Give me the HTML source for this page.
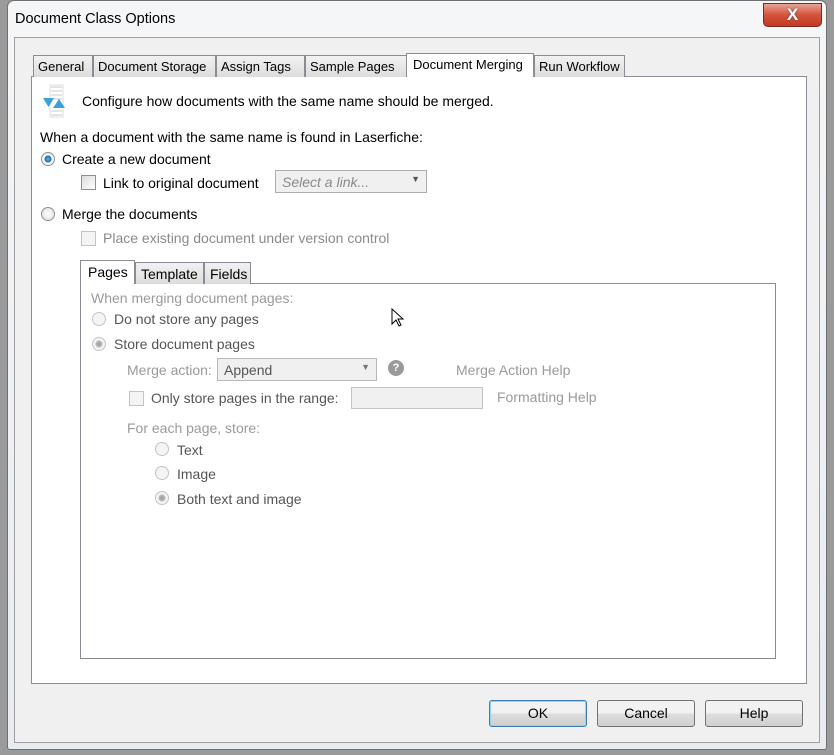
<!DOCTYPE html>
<html><head><style>
*{box-sizing:border-box;margin:0;padding:0}
body{width:834px;height:755px;overflow:hidden;background:#9a9a9a;font-family:"Liberation Sans",sans-serif;font-size:14px;color:#000;position:relative}
.abs{position:absolute}
.win{left:7px;top:0;width:820px;height:750px;background:linear-gradient(#f4f6f8,#e9ecef);border:1px solid #6e6e6e;border-radius:7px 7px 3px 3px}
.client{left:14px;top:37px;width:806px;height:706px;background:#f0f0f0;border:1px solid #a0a0a0}
.tab{top:55px;height:22px;background:linear-gradient(#f2f2f2,#dcdcdc);border:1px solid #898c95;border-bottom:none;padding:3px 4px 0;white-space:nowrap;font-size:13px}
.page{left:31px;top:76px;width:776px;height:608px;background:#fff;border:1px solid #898c95}
.radio{width:14px;height:14px;border-radius:50%;border:1px solid #8e8f8f;background:radial-gradient(#fff,#dcdcdc)}
.cb{width:15px;height:15px;border:1px solid #8e8f8f;background:linear-gradient(135deg,#dcdcdc,#fff)}
.g{color:#9a9a9a}
.gb .radio,.gb .cb{border-color:#c4c4c4;background:#f4f4f4}
.btn{top:700px;width:98px;height:27px;border:1px solid #707070;border-radius:3px;background:linear-gradient(#f2f2f2 45%,#dcdcdc 55%,#cfcfcf);text-align:center;line-height:25px}
.stab{top:262px;height:22px;background:linear-gradient(#f2f2f2,#dcdcdc);border:1px solid #898c95;border-bottom:none;padding:3px 5px 0}
</style></head><body>
<div class="abs win"></div>
<div class="abs" style="left:15px;top:11px;font-size:14.5px">Document Class Options</div>
<div class="abs" style="left:763px;top:3px;width:59px;height:24px;border:1px solid #7b2a20;border-radius:0 0 5px 5px;background:linear-gradient(#e8a394,#d5523c 50%,#c23a22);color:#fff;font-weight:bold;font-size:17px;text-align:center;line-height:22px;text-shadow:0 0 2px #555">X</div>
<div class="abs client"></div>
<div class="abs page"></div>
<div class="abs tab" style="left:33px;width:60px">General</div>
<div class="abs tab" style="left:93px;width:123px">Document Storage</div>
<div class="abs tab" style="left:216px;width:89px">Assign Tags</div>
<div class="abs tab" style="left:305px;width:102px">Sample Pages</div>
<div class="abs" style="left:406px;top:53px;width:128px;height:24px;background:#fff;border:1px solid #898c95;border-bottom:none;padding:3px 6px;font-size:13px;white-space:nowrap">Document Merging</div>
<div class="abs tab" style="left:534px;width:91px">Run Workflow</div>
<svg class="abs" style="left:42px;top:84px" width="30" height="34"><g stroke="#c8c8c8"><line x1="9" y1="3" x2="20" y2="3"/><line x1="9" y1="7" x2="20" y2="7"/><line x1="9" y1="11" x2="20" y2="11"/><line x1="9" y1="15" x2="20" y2="15"/><line x1="9" y1="27" x2="20" y2="27"/><line x1="9" y1="31" x2="20" y2="31"/></g><rect x="8" y="1" width="13" height="32" fill="none" stroke="#ddd"/><path d="M1 14h11l-5.5 9z" fill="#3aa0d8"/><path d="M17 15l6 9H11z" fill="#3aa0d8"/></svg>
<div class="abs" style="left:82px;top:93px">Configure how documents with the same name should be merged.</div>
<div class="abs" style="left:40px;top:129px">When a document with the same name is found in Laserfiche:</div>
<div class="abs radio" style="left:41px;top:152px;background:radial-gradient(#5fb6ec 0,#1b6fb0 3px,#fff 4px,#ddd)"></div>
<div class="abs" style="left:62px;top:151px">Create a new document</div>
<div class="abs cb" style="left:81px;top:175px"></div>
<div class="abs" style="left:103px;top:175px">Link to original document</div>
<div class="abs" style="left:275px;top:170px;width:152px;height:23px;border:1px solid #acacac;background:#f0f0f0;color:#8a8a8a;font-style:italic;padding:3px 6px">Select a link...<span style="position:absolute;right:6px;top:3px;font-style:normal;font-size:9px;color:#555">▼</span></div>
<div class="abs radio" style="left:41px;top:207px"></div>
<div class="abs" style="left:62px;top:206px">Merge the documents</div>
<div class="gb"><div class="abs cb" style="left:81px;top:231px"></div></div>
<div class="abs g" style="left:103px;top:230px;color:#8a8a8a">Place existing document under version control</div>
<div class="abs" style="left:80px;top:283px;width:696px;height:376px;background:#fff;border:1px solid #898c95"></div>
<div class="abs" style="left:80px;top:260px;width:55px;height:24px;background:#fff;border:1px solid #898c95;border-bottom:none;padding:3px 7px">Pages</div>
<div class="abs stab" style="left:135px;width:69px">Template</div>
<div class="abs stab" style="left:204px;width:47px">Fields</div>
<div class="gb">
<div class="abs g" style="left:91px;top:290px">When merging document pages:</div>
<div class="abs radio" style="left:92px;top:312px"></div>
<div class="abs" style="left:114px;top:311px;color:#555">Do not store any pages</div>
<div class="abs radio" style="left:92px;top:337px;background:radial-gradient(#999 0,#bbb 3px,#f4f4f4 4px)"></div>
<div class="abs" style="left:114px;top:336px;color:#555">Store document pages</div>
<div class="abs g" style="left:127px;top:362px">Merge action:</div>
<div class="abs" style="left:217px;top:358px;width:160px;height:23px;border:1px solid #b8b8b8;background:#f0f0f0;color:#555;padding:3px 6px">Append<span style="position:absolute;right:6px;top:3px;font-size:9px;color:#777">▼</span></div>
<div class="abs" style="left:388px;top:360px;width:16px;height:16px;border-radius:50%;background:#9a9a9a;color:#fff;font-weight:bold;font-size:11px;text-align:center;line-height:16px">?</div>
<div class="abs g" style="left:456px;top:362px">Merge Action Help</div>
<div class="abs cb" style="left:129px;top:391px"></div>
<div class="abs" style="left:151px;top:390px;color:#555">Only store pages in the range:</div>
<div class="abs" style="left:351px;top:387px;width:132px;height:22px;border:1px solid #c4c4c4;background:#f0f0f0"></div>
<div class="abs g" style="left:497px;top:389px">Formatting Help</div>
<div class="abs g" style="left:127px;top:420px">For each page, store:</div>
<div class="abs radio" style="left:155px;top:442px"></div>
<div class="abs" style="left:177px;top:442px;color:#555">Text</div>
<div class="abs radio" style="left:155px;top:466px"></div>
<div class="abs" style="left:177px;top:466px;color:#555">Image</div>
<div class="abs radio" style="left:155px;top:491px;background:radial-gradient(#999 0,#bbb 3px,#f4f4f4 4px)"></div>
<div class="abs" style="left:177px;top:491px;color:#555">Both text and image</div>
</div>
<svg class="abs" style="left:391px;top:308px" width="14" height="20"><path d="M1 1v15l4-4 3 6 2-1-3-6h5z" fill="#fff" stroke="#000"/></svg>
<div class="abs btn" style="left:489px;border-color:#3c7fb1;box-shadow:inset 0 0 0 1px #8fd3f5">OK</div>
<div class="abs btn" style="left:597px">Cancel</div>
<div class="abs btn" style="left:705px">Help</div>
</body></html>
